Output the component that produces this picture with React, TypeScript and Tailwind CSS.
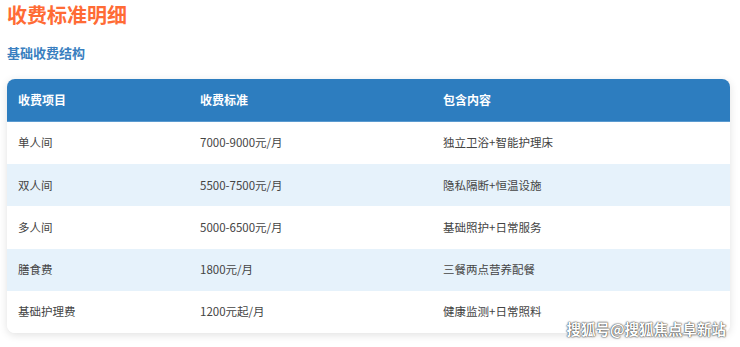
const rows = [
  ["单人间", "7000-9000元/月", "独立卫浴+智能护理床"],
  ["双人间", "5500-7500元/月", "隐私隔断+恒温设施"],
  ["多人间", "5000-6500元/月", "基础照护+日常服务"],
  ["膳食费", "1800元/月", "三餐两点营养配餐"],
  ["基础护理费", "1200元起/月", "健康监测+日常照料"],
];

export default function App() {
  return (
    <div
      className="relative w-[740px] h-[347px] overflow-hidden bg-white px-[7px] pt-[2px]"
      style={{ fontFamily: '"Noto Sans CJK SC", "Noto Sans", sans-serif' }}
    >
      <h1 className="text-[20px] leading-[26px] font-bold text-[#ff6b35]">收费标准明细</h1>
      <h2 className="mt-[14px] text-[13px] leading-[22px] font-bold text-[#3a7fc0]">基础收费结构</h2>
      <div className="mt-[15px] w-[723px] rounded-[8px] overflow-hidden bg-white shadow-[0_2px_8px_rgba(0,0,0,0.12)]">
        <div className="grid grid-cols-[182px_243px_298px] h-[43px] items-center bg-[#2d7dbf] text-white text-[12px] font-bold border-b border-[#5a9ad0]">
          <div className="pl-[11px]">收费项目</div>
          <div className="pl-[11px]">收费标准</div>
          <div className="pl-[11px]">包含内容</div>
        </div>
        {rows.map((r, i) => (
          <div
            key={i}
            className={
              "grid grid-cols-[182px_243px_298px] h-[42.2px] items-center text-[11.5px] text-[#444] " +
              (i % 2 === 1 ? "bg-[#e6f2fb]" : "bg-white")
            }
          >
            <div className="pl-[11px]">{r[0]}</div>
            <div className="pl-[11px]">{r[1]}</div>
            <div className="pl-[11px]">{r[2]}</div>
          </div>
        ))}
      </div>
      <div className="absolute right-[14px] bottom-[7px] text-[14.5px] font-bold text-white [text-shadow:0_0_2px_#333,0_0_1px_#333]">
        搜狐号@搜狐焦点阜新站
      </div>
    </div>
  );
}
